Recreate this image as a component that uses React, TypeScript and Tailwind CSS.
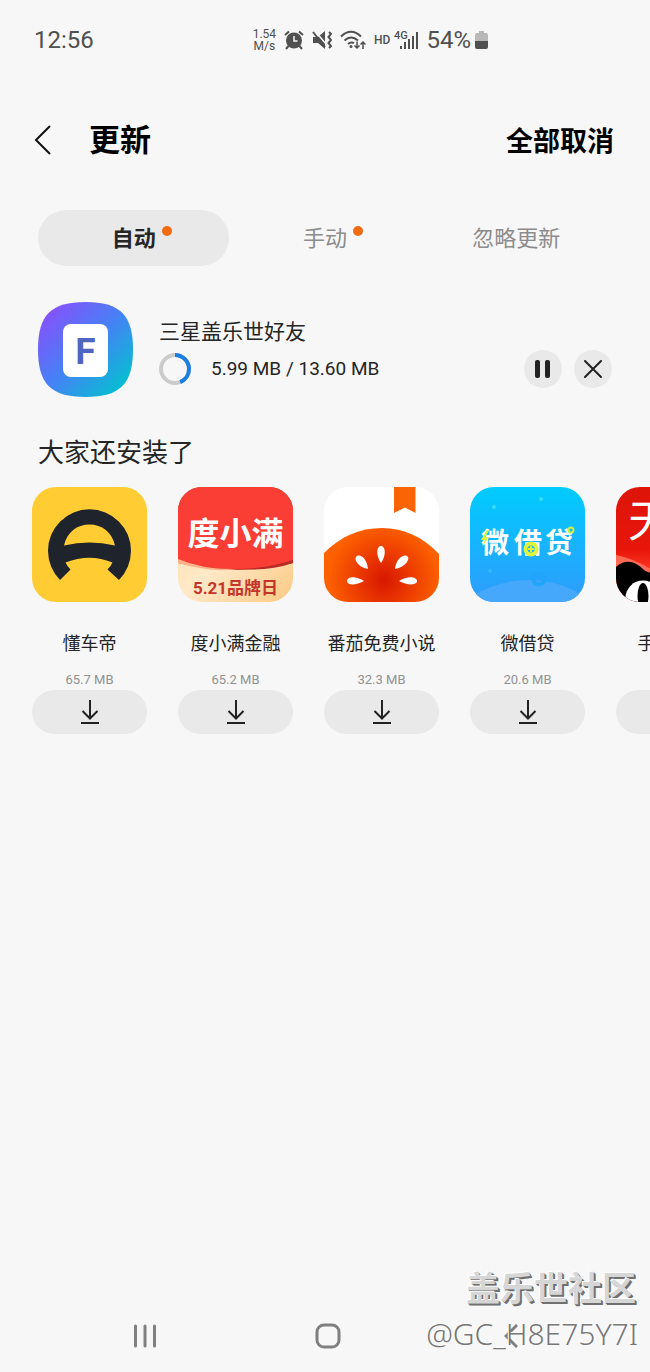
import { useState } from 'react'
import type { ReactNode } from 'react'

type App = {
  name: string
  size: string
  icon: ReactNode
}

const CJK = "'Noto Sans CJK SC', sans-serif"

function DongchediIcon() {
  return (
    <svg viewBox="0 0 115 115" className="h-full w-full" aria-hidden="true">
      <rect width="115" height="115" fill="#ffcc33" />
      <path
        d="M28 93A41.500 41.500 0 1 1 87 93L75.500 82.500Q79 79 80.500 75.500Q57.500 66 33.500 75.500Q35 79 38.500 82.500Z"
        fill="#1f232b"
      />
      <path d="M32 58.500C35 45 45 37.500 57.500 37.500C70 37.500 80 45 83 58.500Q57.500 52.500 32 58.500Z" fill="#ffcc33" />
    </svg>
  )
}

function DuxiaomanIcon() {
  return (
    <svg viewBox="0 0 115 115" className="h-full w-full" aria-hidden="true">
      <defs>
        <linearGradient id="dxm-band" x1="0" y1="0" x2="1" y2="1">
          <stop offset="0" stopColor="#ffdca3" />
          <stop offset="0.5" stopColor="#ffe9c8" />
          <stop offset="1" stopColor="#fbc983" />
        </linearGradient>
      </defs>
      <rect width="115" height="115" fill="url(#dxm-band)" />
      <path d="M0 0H115V76Q57 90 0 76Z" fill="#c9302a" />
      <path d="M0 0H115V73Q88 82 57 82Q26 82 0 73Z" fill="#fb3e35" />
      <path d="M0 72Q26 83 60 82Q34 86 0 76Z" fill="#ffb38a" />
      <path d="M115 73Q92 81 66 82Q92 84 115 76Z" fill="#b92a26" />
      <text x="57.500" y="58" textAnchor="middle" fontFamily={CJK} fontSize="32" fontWeight="700" fill="#fff">
        度小满
      </text>
      <text x="57.500" y="107" textAnchor="middle" fontFamily="Roboto, 'Noto Sans CJK SC', sans-serif" fontSize="17" fontWeight="700" fill="#c4362b">
        5.21品牌日
      </text>
    </svg>
  )
}

function TomatoIcon() {
  return (
    <svg viewBox="0 0 115 115" className="h-full w-full" aria-hidden="true">
      <defs>
        <radialGradient id="tomato" gradientUnits="userSpaceOnUse" cx="60" cy="93" r="56">
          <stop offset="0" stopColor="#d81600" />
          <stop offset="0.5" stopColor="#ec3c00" />
          <stop offset="1" stopColor="#fd6100" />
        </radialGradient>
      </defs>
      <rect width="115" height="115" fill="#fff" />
      <path d="M0 66C17 49 36 41 58 41C80 41 99 50 115 67V115H0Z" fill="url(#tomato)" />
      <path d="M70 0H91.500V26L81 20.500L70 26Z" fill="#fb6404" />
      <g fill="#fff">
        <path d="M57 76C51 67 53 59 57 59S63 67 57 76Z" />
        <path d="M44 82C33 80 29 71 33 69S43 72 44 82Z" />
        <path d="M71 82C72 72 79 67 83 69S82 80 71 82Z" />
        <path d="M40 94C31 99 23 98 23 94S31 88 40 94Z" />
        <path d="M75 94C84 88 93 90 93 94S84 99 75 94Z" />
      </g>
    </svg>
  )
}

function WeijiedaiIcon() {
  return (
    <svg viewBox="0 0 115 115" className="h-full w-full" aria-hidden="true">
      <defs>
        <linearGradient id="wjd" x1="0" y1="0" x2="0" y2="1">
          <stop offset="0" stopColor="#00ccff" />
          <stop offset="1" stopColor="#2f9bfc" />
        </linearGradient>
      </defs>
      <rect width="115" height="115" fill="url(#wjd)" />
      <path d="M0 110Q28 93 60 93Q92 94 115 110V115H0Z" fill="#45a8fb" />
      <circle cx="69" cy="92" r="5.500" fill="none" stroke="#1fa6fa" strokeWidth="4" />
      <circle cx="24" cy="20" r="2" fill="#3adcff" />
      <circle cx="71" cy="12" r="2" fill="#3adcff" />
      <circle cx="20" cy="84" r="2" fill="#35b5ff" />
      <g fontFamily={CJK} fontSize="28" fontWeight="700" fill="#fff">
        <text x="11" y="66">微</text>
        <text x="44" y="66">借</text>
        <text x="75" y="66">贷</text>
      </g>
      <path d="M17 43L11 53H15L12 60L19 50H15L19 43Z" fill="#dcf53a" />
      <circle cx="61" cy="62" r="5.500" fill="#1bb2fd" stroke="#dcf53a" strokeWidth="4" />
      <path d="M61 59V65M58 62H64" stroke="#dcf53a" strokeWidth="2" />
      <circle cx="101" cy="43" r="2.500" fill="none" stroke="#c9f03c" strokeWidth="2" />
    </svg>
  )
}

function TmallIcon() {
  return (
    <svg viewBox="0 0 115 115" className="h-full w-full" aria-hidden="true">
      <defs>
        <linearGradient id="tmall" x1="0" y1="0" x2="0" y2="1">
          <stop offset="0" stopColor="#dd1409" />
          <stop offset="0.55" stopColor="#e8160a" />
          <stop offset="0.75" stopColor="#ff3b28" />
        </linearGradient>
      </defs>
      <rect width="115" height="115" fill="url(#tmall)" />
      <path d="M0 68Q20 72 45 88V96H0Z" fill="#ff6a55" />
      <path d="M0 80C10 71 20 75 28 83C34 88 60 90 87 83C96 75 105 71 115 80V115H0Z" fill="#000" />
      <circle cx="27" cy="111" r="17.500" fill="#fff" />
      <ellipse cx="27" cy="109" rx="5.500" ry="13" fill="#000" />
      <circle cx="88" cy="111" r="17.500" fill="#fff" />
      <text x="12" y="50" fontFamily={CJK} fontSize="44" fontWeight="400" fill="#fff">
        天猫
      </text>
    </svg>
  )
}

function FriendsIcon() {
  return (
    <svg viewBox="0 0 95 95" className="h-[95px] w-[95px] shrink-0" aria-hidden="true">
      <defs>
        <linearGradient id="friends" x1="0.1" y1="0.1" x2="0.9" y2="0.9">
          <stop offset="0" stopColor="#8552fb" />
          <stop offset="0.5" stopColor="#4582f5" />
          <stop offset="1" stopColor="#05bfd0" />
        </linearGradient>
      </defs>
      <path
        d="M47.500 0C82 0 95 13 95 47.500S82 95 47.500 95S0 82 0 47.500S13 0 47.500 0Z"
        fill="url(#friends)"
      />
      <rect x="25" y="22" width="45" height="53" rx="8" fill="#fff" />
      <text x="47.500" y="62" textAnchor="middle" fontFamily="Roboto, sans-serif" fontSize="37" fontWeight="700" fill="#4f66c0">
        F
      </text>
    </svg>
  )
}

function StatusBar() {
  return (
    <div className="flex h-20 items-center justify-between pr-[162px] pl-[34px] text-[#505050]">
      <span className="text-2xl">12:56</span>
      <div className="flex items-center gap-2">
        <div className="text-center text-xs leading-3">
          <div>1.54</div>
          <div>M/s</div>
        </div>
        <svg viewBox="0 0 20 20" className="h-5 w-5" fill="none" stroke="currentColor" strokeWidth="2" aria-label="闹钟">
          <circle cx="10" cy="10.500" r="8" fill="currentColor" stroke="none" />
          <path d="M1 5L5 1.500M19 5L15 1.500M4.500 16L2 19M15.500 16L18 19" />
          <path d="M10 6V11H13.500" stroke="#f7f7f7" strokeWidth="1.500" />
        </svg>
        <svg viewBox="0 0 20 20" className="h-5 w-5" aria-label="静音">
          <path d="M1 7H6L13 1V19L6 13H1Z" fill="currentColor" />
          <path d="M3 1L14 14" stroke="#f7f7f7" strokeWidth="1.500" />
          <path d="M1 2L13 17" stroke="currentColor" strokeWidth="2" />
          <path d="M17 2L19 4L16.500 7L19 10L16.500 13L19 16L17 18" fill="none" stroke="currentColor" strokeWidth="2" />
        </svg>
        <svg viewBox="0 0 26 20" className="h-5 w-[26px]" fill="none" stroke="currentColor" strokeWidth="2" aria-label="WLAN">
          <path d="M1 6.500Q11 -3 21 6.500M4.500 10.500Q11 4.500 18 10.500M8 14Q11 11.500 14 13" />
          <circle cx="11" cy="16.500" r="1.500" fill="currentColor" stroke="none" />
          <path d="M17 11.500V18M14.500 15.500L17 18L19.500 15.500M23 19V12M20.500 14.500L23 12L25.500 14.500" strokeWidth="1.500" />
        </svg>
        <span className="text-xs font-medium">HD</span>
        <svg viewBox="0 0 24 20" className="-ml-1 h-5 w-6" aria-label="4G">
          <text x="0" y="9" fontFamily="Roboto, sans-serif" fontSize="11" fontWeight="500" fill="currentColor">
            4G
          </text>
          <path d="M7 19V16M11 19V12M15 19V9M19 19V6M23 19V2" stroke="currentColor" strokeWidth="2" />
        </svg>
        <div className="flex items-center gap-1">
          <span className="text-2xl">54%</span>
          <svg viewBox="0 0 13 20" className="h-5 w-[13px]" aria-label="电池">
            <path d="M4 1H9V3H11Q13 3 13 5V11H0V5Q0 3 2 3H4Z" fill="#b8b8b8" />
            <path d="M0 11H13V17Q13 19 11 19H2Q0 19 0 17Z" fill="currentColor" />
          </svg>
        </div>
      </div>
    </div>
  )
}

function Progress({ value }: { value: number }) {
  return (
    <svg viewBox="0 0 32 32" className="h-8 w-8 -rotate-90" fill="none" strokeWidth="4" aria-hidden="true">
      <circle cx="16" cy="16" r="14" stroke="#cbcbcb" />
      <circle cx="16" cy="16" r="14" stroke="#1a7fe0" pathLength="100" strokeDasharray={`${value} 100`} />
    </svg>
  )
}

function DownloadArrow() {
  return (
    <svg viewBox="0 0 18 26" className="h-[26px] w-[18px]" fill="none" stroke="#222" strokeWidth="2" aria-hidden="true">
      <path d="M9 1V19M1.500 12L9 19.500L16.500 12M0 24H18" />
    </svg>
  )
}

const tabs = [
  { label: '自动', dot: true },
  { label: '手动', dot: true },
  { label: '忽略更新', dot: false },
]

const apps: App[] = [
  { name: '懂车帝', size: '65.7 MB', icon: <DongchediIcon /> },
  { name: '度小满金融', size: '65.2 MB', icon: <DuxiaomanIcon /> },
  { name: '番茄免费小说', size: '32.3 MB', icon: <TomatoIcon /> },
  { name: '微借贷', size: '20.6 MB', icon: <WeijiedaiIcon /> },
  { name: '手机天猫', size: '', icon: <TmallIcon /> },
]

export default function App() {
  const [activeTab, setActiveTab] = useState('自动')
  const [isPaused, setIsPaused] = useState(false)

  return (
    <div className="relative flex min-h-screen flex-col overflow-hidden bg-[#f7f7f7] font-[Roboto,'Noto_Sans_CJK_SC',sans-serif] text-[#252525]">
      <StatusBar />

      {/* Header */}
      <header className="flex h-[120px] items-center pr-9 pl-[34px] text-black">
        <button aria-label="返回" className="mr-[38px]">
          <svg viewBox="0 0 17 30" className="h-[30px] w-[17px]" fill="none" stroke="#111" strokeWidth="2">
            <path d="M16 1L2 15L16 29" />
          </svg>
        </button>
        <h1 className="pt-0.5 text-[31px] font-bold">更新</h1>
        <button className="ml-auto pt-1 text-[27px] font-bold">全部取消</button>
      </header>

      {/* Tabs */}
      <div role="tablist" className="mx-[38px] mt-[10px] grid grid-cols-3">
        {tabs.map(({ label, dot }) => (
          <button
            key={label}
            role="tab"
            aria-selected={activeTab === label}
            onClick={() => setActiveTab(label)}
            className={`flex h-14 items-center justify-center rounded-full text-[22px] ${
              activeTab === label ? 'bg-[#e9e9e9] font-bold text-[#252525]' : 'text-[#8c8c8c]'
            }`}
          >
            <span className="relative">
              {label}
              {dot && <span className="absolute top-1 -right-4 h-[10px] w-[10px] rounded-full bg-[#f26a12]" />}
            </span>
          </button>
        ))}
      </div>

      {/* Current download */}
      <section className="mx-[38px] mt-9 flex items-start">
        <FriendsIcon />
        <div className="ml-[26px] min-w-0 flex-1 pt-3">
          <h2 className="text-[21px] leading-9">三星盖乐世好友</h2>
          <div className="flex h-[38px] items-center">
            <Progress value={44} />
            <span className="ml-5 text-[19px]">5.99 MB / 13.60 MB</span>
            <div className="ml-auto flex gap-3">
              <button
                aria-label={isPaused ? '继续' : '暂停'}
                onClick={() => setIsPaused(!isPaused)}
                className="flex h-[38px] w-[38px] items-center justify-center rounded-full bg-[#e9e9e9]"
              >
                <svg viewBox="0 0 16 18" className="h-[18px] w-4" fill="#222">
                  {isPaused ? (
                    <path d="M2 0L15 9L2 18Z" />
                  ) : (
                    <>
                      <rect x="0" width="5" height="18" rx="2" />
                      <rect x="10" width="5" height="18" rx="2" />
                    </>
                  )}
                </svg>
              </button>
              <button
                aria-label="取消"
                className="flex h-[38px] w-[38px] items-center justify-center rounded-full bg-[#e9e9e9]"
              >
                <svg viewBox="0 0 18 18" className="h-[18px] w-[18px]" stroke="#222" strokeWidth="2" strokeLinecap="round">
                  <path d="M1 1L17 17M17 1L1 17" />
                </svg>
              </button>
            </div>
          </div>
        </div>
      </section>

      {/* Recommendations */}
      <section className="mt-[38px]">
        <h2 className="pl-[38px] text-[26px] leading-9">大家还安装了</h2>
        <ul className="mt-4 flex gap-[31px] overflow-hidden pl-8">
          {apps.map(({ name, size, icon }) => (
            <li key={name} className="flex w-[115px] shrink-0 flex-col items-center">
              <div className="h-[115px] w-[115px] overflow-hidden rounded-3xl">{icon}</div>
              <h3 className="mt-7 text-lg leading-7 whitespace-nowrap">{name}</h3>
              <p className="mt-3 h-5 text-[13px] leading-5 text-[#929292]">{size}</p>
              <button
                aria-label={`下载${name}`}
                className="flex h-11 w-full items-center justify-center rounded-full bg-[#e9e9e9]"
              >
                <DownloadArrow />
              </button>
            </li>
          ))}
        </ul>
      </section>

      {/* Navigation bar */}
      <nav className="mt-auto grid h-[72px] grid-cols-3 items-center justify-items-center pr-12 pl-[54px] text-[#808080]">
        <button aria-label="最近任务">
          <svg viewBox="0 0 24 24" className="h-6 w-6" stroke="currentColor" strokeWidth="3" strokeLinecap="round">
            <path d="M2.500 2V22M12 2V22M21.500 2V22" />
          </svg>
        </button>
        <button aria-label="主页">
          <svg viewBox="0 0 26 26" className="h-[26px] w-[26px]" fill="none" stroke="currentColor" strokeWidth="3">
            <rect x="2" y="2" width="22" height="22" rx="7" />
          </svg>
        </button>
        <button aria-label="后退">
          <svg viewBox="0 0 14 24" className="h-6 w-[14px]" fill="none" stroke="currentColor" strokeWidth="3">
            <path d="M13 1L2 12L13 23" />
          </svg>
        </button>
      </nav>

      {/* Community watermark */}
      <div className="pointer-events-none absolute right-3 bottom-4 text-right">
        <p className="pr-0.5 text-[34px] leading-[46px] font-bold text-[#d6d6d6] [text-shadow:-1px_-1px_0_#ffffff,1px_1px_0_#707070,2px_2px_0_#707070]">
          盖乐世社区
        </p>
        <p className="font-['Noto_Sans',sans-serif] text-[30px] leading-[44px] font-light text-[#777777] [text-shadow:-1px_-1px_0_#ffffff]">
          @GC_H8E75Y7I
        </p>
      </div>
    </div>
  )
}
